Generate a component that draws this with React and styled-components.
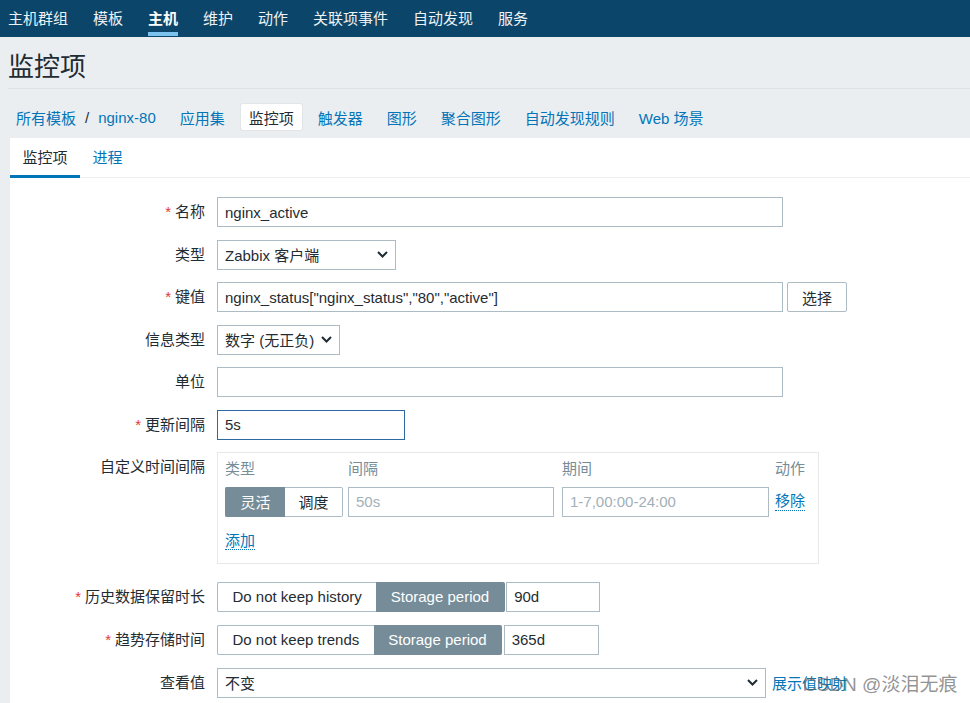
import React from "react"
import styled, { createGlobalStyle, css } from "styled-components"

const GlobalStyle = createGlobalStyle`
  * { box-sizing: border-box; }
  html, body {
    margin: 0;
    padding: 0;
    background: #ebeef1;
  }
  body {
    font-family: "Liberation Sans", "Noto Sans CJK SC", Arial, sans-serif;
    font-size: 15px;
    color: #1f2c33;
    overflow: hidden;
  }
`

const navItems = ["主机群组", "模板", "主机", "维护", "动作", "关联项事件", "自动发现", "服务"]
const subItems = ["应用集", "监控项", "触发器", "图形", "聚合图形", "自动发现规则", "Web 场景"]

const Chevron = () => (
  <svg width="11" height="7" viewBox="0 0 11 7">
    <path d="M1 1l4.5 4.5L10 1" fill="none" stroke="#1f2c33" strokeWidth="2" />
  </svg>
)

export default function App() {
  return (
    <Page>
      <GlobalStyle />
      <TopNav>
        {navItems.map((t) => (
          <NavItem key={t} $active={t === "主机"}>
            {t}
          </NavItem>
        ))}
      </TopNav>

      <Main>
        <Title>监控项</Title>
        <SubNav>
          <SubItem>
            <Link>所有模板</Link>
            <Slash>/</Slash>
            <Link>nginx-80</Link>
          </SubItem>
          {subItems.map((t) => (
            <SubItem key={t} $active={t === "监控项"}>
              {t}
            </SubItem>
          ))}
        </SubNav>

        <Panel>
          <Tabs>
            <Tab $active>监控项</Tab>
            <Tab>进程</Tab>
          </Tabs>

          <Form>
            <Row>
              <Label $required>名称</Label>
              <Field>
                <Input $w={566} defaultValue="nginx_active" />
              </Field>
            </Row>
            <Row>
              <Label>类型</Label>
              <Field>
                <Select $w={179}>
                  <span>Zabbix 客户端</span>
                  <Chevron />
                </Select>
              </Field>
            </Row>
            <Row>
              <Label $required>键值</Label>
              <Field>
                <Input $w={566} defaultValue={'nginx_status["nginx_status","80","active"]'} />
                <Button>选择</Button>
              </Field>
            </Row>
            <Row>
              <Label>信息类型</Label>
              <Field>
                <Select $w={123}>
                  <span>数字 (无正负)</span>
                  <Chevron />
                </Select>
              </Field>
            </Row>
            <Row>
              <Label>单位</Label>
              <Field>
                <Input $w={566} defaultValue="" />
              </Field>
            </Row>
            <Row>
              <Label $required>更新间隔</Label>
              <Field>
                <Input $w={188} $focus defaultValue="5s" />
              </Field>
            </Row>
            <Row $gap={18}>
              <Label>自定义时间间隔</Label>
              <Field>
                <IntervalBox>
                  <IntervalGrid>
                    <ColHead>类型</ColHead>
                    <ColHead>间隔</ColHead>
                    <ColHead>期间</ColHead>
                    <ColHead>动作</ColHead>

                    <Segments>
                      <Seg $active $h={29.5} $w={60}>灵活</Seg>
                      <Seg $h={29.5} $w={58}>调度</Seg>
                    </Segments>
                    <Input $w={206} $h={29.5} placeholder="50s" />
                    <Input $w={207} $h={29.5} placeholder="1-7,00:00-24:00" />
                    <DottedLink>移除</DottedLink>
                  </IntervalGrid>
                  <AddRow>
                    <DottedLink>添加</DottedLink>
                  </AddRow>
                </IntervalBox>
              </Field>
            </Row>
            <Row $gap={13}>
              <Label $required>历史数据保留时长</Label>
              <Field>
                <Segments>
                  <Seg>Do not keep history</Seg>
                  <Seg $active>Storage period</Seg>
                </Segments>
                <Input $w={94} $ml={1.5} defaultValue="90d" />
              </Field>
            </Row>
            <Row $gap={13}>
              <Label $required>趋势存储时间</Label>
              <Field>
                <Segments>
                  <Seg>Do not keep trends</Seg>
                  <Seg $active>Storage period</Seg>
                </Segments>
                <Input $w={95} $ml={1.5} defaultValue="365d" />
              </Field>
            </Row>
            <Row>
              <Label>查看值</Label>
              <Field>
                <Select $w={549}>
                  <span>不变</span>
                  <Chevron />
                </Select>
                <Link $ml={6}>展示值映射</Link>
              </Field>
            </Row>
          </Form>
        </Panel>
      </Main>

      <Watermark>CSDN @淡泪无痕</Watermark>
    </Page>
  )
}

const Page = styled.div`
  position: relative;
  min-height: 100vh;
  display: flex;
  flex-direction: column;
`

const TopNav = styled.nav`
  display: flex;
  gap: 25px;
  height: 37px;
  padding-left: 8px;
  background: #0b466a;
`

const NavItem = styled.span`
  position: relative;
  line-height: 37px;
  font-size: 15px;
  color: #eef2f5;
  ${(p) =>
    p.$active &&
    css`
      color: #ffffff;
      font-weight: bold;
      &::after {
        content: "";
        position: absolute;
        left: 0;
        right: 0;
        bottom: 1px;
        height: 4px;
        background: #7cc2ef;
      }
    `}
`

const Main = styled.main`
  flex: 1;
  display: flex;
  flex-direction: column;
  padding-left: 8px;
`

const Title = styled.h1`
  margin: 0;
  padding: 13px 0 4px;
  font-size: 26px;
  line-height: 34px;
  font-weight: normal;
  color: #1f2c33;
  border-bottom: 1px solid #dde2e6;
`

const SubNav = styled.div`
  display: flex;
  gap: 8px;
  padding: 15px 0 8px;
`

const SubItem = styled.span`
  display: flex;
  align-items: center;
  height: 26px;
  padding: 0 8px;
  font-size: 15px;
  color: #0275b8;
  border-radius: 2px;
  ${(p) =>
    p.$active &&
    css`
      background: #ffffff;
      color: #1f2c33;
      box-shadow: 0 0 0 1px #e2e6e9;
    `}
`

const Link = styled.span`
  color: #0275b8;
  font-size: 15px;
  margin-left: ${(p) => p.$ml || 0}px;
`

const Slash = styled.span`
  padding: 0 9px;
  color: #1f2c33;
`

const Panel = styled.section`
  flex: 1;
  margin-left: 2px;
  background: #ffffff;
`

const Tabs = styled.div`
  display: flex;
  height: 40px;
  border-bottom: 1px solid #ebeef1;
`

const Tab = styled.span`
  padding: 0 12.5px;
  line-height: 39px;
  font-size: 15px;
  color: ${(p) => (p.$active ? "#1f2c33" : "#0275b8")};
  box-shadow: ${(p) => (p.$active ? "inset 0 -3px 0 #0275b8" : "none")};
  height: 40px;
`

const Form = styled.div`
  padding-top: 19px;
`

const Row = styled.div`
  display: grid;
  grid-template-columns: 195px 1fr;
  column-gap: 12px;
  margin-bottom: ${(p) => (p.$gap != null ? p.$gap : 12.5)}px;
`

const Label = styled.label`
  text-align: right;
  line-height: 30px;
  font-size: 15px;
  color: #1f2c33;
  ${(p) =>
    p.$required &&
    css`
      &::before {
        content: "*";
        color: #e33734;
        margin-right: 4px;
      }
    `}
`

const Field = styled.div`
  display: flex;
  align-items: center;
  min-height: 30px;
`

const Input = styled.input`
  width: ${(p) => p.$w}px;
  height: ${(p) => p.$h || 30}px;
  margin: 0 0 0 ${(p) => p.$ml || 0}px;
  padding: 0 7px;
  border: 1px solid ${(p) => (p.$focus ? "#2a6aa1" : "#acbbc4")};
  border-radius: 0;
  background: #ffffff;
  font-family: "Liberation Sans", "Noto Sans CJK SC", Arial, sans-serif;
  font-size: 15px;
  color: #1f2c33;
  outline: none;
  &::placeholder {
    color: #a3b0b8;
  }
`

const Select = styled.div`
  width: ${(p) => p.$w}px;
  height: 30px;
  display: flex;
  align-items: center;
  justify-content: space-between;
  padding: 0 7px;
  border: 1px solid #acbbc4;
  background: #ffffff;
  font-size: 15px;
  color: #1f2c33;
  svg {
    flex: none;
  }
`

const Button = styled.span`
  width: 60px;
  height: 29.5px;
  margin-left: 4px;
  display: flex;
  align-items: center;
  justify-content: center;
  border: 1px solid #acbbc4;
  border-radius: 2px;
  background: #ffffff;
  font-size: 15px;
  color: #1f2c33;
`

const IntervalBox = styled.div`
  width: 602px;
  border: 1px solid #e6e9ec;
  padding: 5px 7px 12px;
`

const IntervalGrid = styled.div`
  display: grid;
  grid-template-columns: 123px 214px 213px auto;
  row-gap: 7px;
  align-items: center;
`

const ColHead = styled.span`
  line-height: 22px;
  font-size: 15px;
  color: #768d99;
`

const Segments = styled.div`
  display: flex;
`

const Seg = styled.span`
  display: flex;
  align-items: center;
  justify-content: center;
  height: ${(p) => p.$h || 30}px;
  ${(p) => (p.$w ? `width: ${p.$w}px;` : "padding: 0 14.5px;")}
  font-size: 15px;
  border: 1px solid ${(p) => (p.$active ? "#768d99" : "#acbbc4")};
  background: ${(p) => (p.$active ? "#768d99" : "#ffffff")};
  color: ${(p) => (p.$active ? "#ffffff" : "#1f2c33")};
  &:first-child {
    border-radius: 2px 0 0 2px;
    border-right: none;
  }
  &:last-child {
    border-radius: 0 2px 2px 0;
    border-left: none;
  }
`

const DottedLink = styled.span`
  justify-self: start;
  font-size: 15px;
  color: #0275b8;
  border-bottom: 1px dotted #0275b8;
  line-height: 18px;
`

const AddRow = styled.div`
  margin-top: 14px;
  line-height: 20px;
`

const Watermark = styled.div`
  position: absolute;
  left: 803px;
  top: 673px;
  font-size: 19px;
  line-height: 24px;
  color: rgba(100, 100, 100, 0.7);
  pointer-events: none;
`
